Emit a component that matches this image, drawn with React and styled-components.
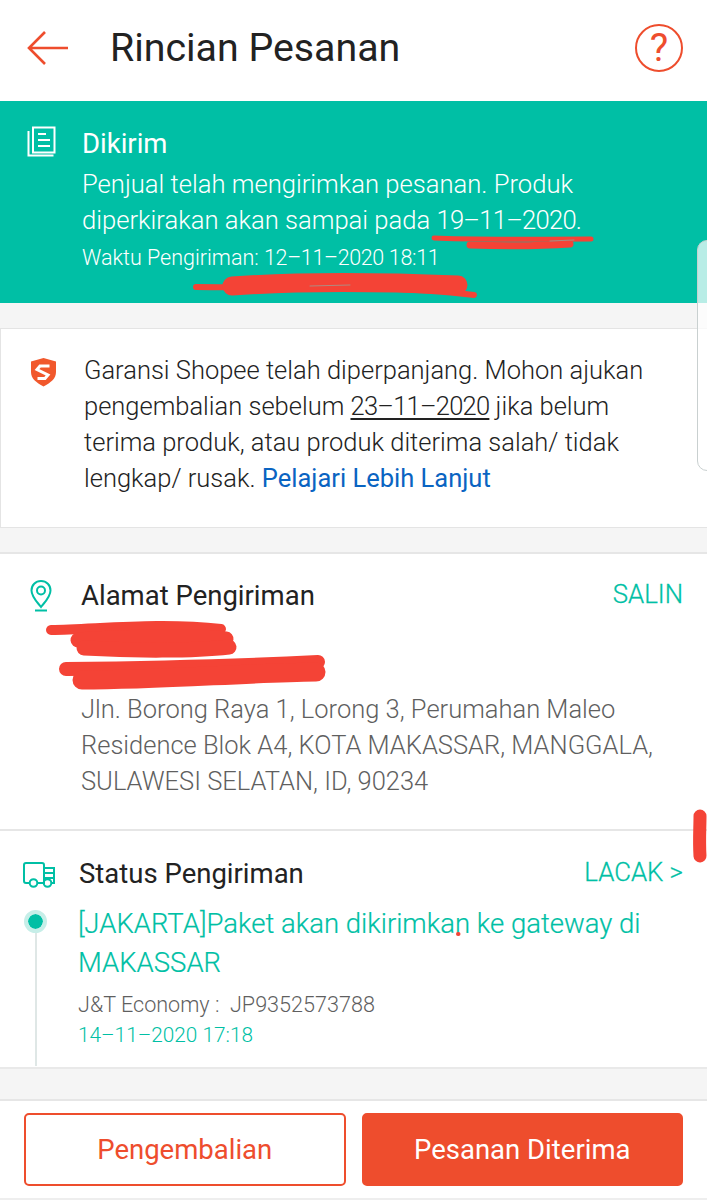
import React from 'react'
import styled, { createGlobalStyle } from 'styled-components'

const orange = '#ee4d2d'
const teal = '#00bfa5'

const Global = createGlobalStyle`
  html, body {
    margin: 0;
    padding: 0;
    background: #f5f5f5;
    font-family: Roboto, 'Liberation Sans', sans-serif;
  }
`

const Page = styled.div`
  position: relative;
  width: 707px;
  height: 1200px;
  overflow: hidden;
  display: flex;
  flex-direction: column;
  background: #f5f5f5;
`

const Header = styled.header`
  height: 101px;
  flex: none;
  box-sizing: border-box;
  display: flex;
  align-items: center;
  padding: 0 24px 6px 27px;
  background: #fff;
`

const Title = styled.h1`
  flex: 1;
  margin: 0 0 0 41px;
  font-size: 39.3px;
  font-weight: 400;
  color: #222;
`

const HelpIcon = styled.div`
  width: 44px;
  height: 44px;
  border: 2px solid ${orange};
  border-radius: 50%;
  display: flex;
  align-items: center;
  justify-content: center;
  font-size: 39px;
  color: ${orange};
`

const Banner = styled.section`
  height: 202px;
  flex: none;
  box-sizing: border-box;
  display: flex;
  padding: 25px 0 0 27px;
  background: ${teal};
  color: #fff;
`

const BannerIcon = styled.svg`
  width: 29px;
  height: 31px;
  flex: none;
  margin-right: 27px;
`

const BannerTitle = styled.div`
  font-size: 27.5px;
  line-height: 35px;
  margin-left: -1px;
`

const BannerText = styled.div`
  margin-top: 6px;
  margin-left: -1px;
  font-size: 25.6px;
  font-weight: 300;
  line-height: 35.5px;
`

const BannerNote = styled.div`
  margin-top: 3px;
  margin-left: -1px;
  font-size: 21.5px;
  font-weight: 300;
  line-height: 34px;
`

const DateText = styled.span`
  letter-spacing: ${(p) => p.$spacing || -0.75}px;
`

const NoticeCard = styled.section`
  height: 200px;
  flex: none;
  box-sizing: border-box;
  margin-top: 25px;
  display: flex;
  padding: 23px 0 0 29px;
  background: #fff;
  border: 1px solid #e4e4e4;
  border-right: none;
  color: #222;
`

const ShieldIcon = styled.svg`
  width: 27px;
  height: 31px;
  flex: none;
  margin-top: 5px;
  margin-right: 27px;
`

const BodyText = styled.div`
  font-size: 25.5px;
  font-weight: 300;
  line-height: 36px;
`

const Dated = styled(DateText)`
  text-decoration: underline;
  text-underline-offset: 3px;
`

const Link = styled.span`
  color: #0a64c2;
  font-weight: 400;
`

const Section = styled.section`
  flex: none;
  height: ${(p) => p.$height}px;
  margin-top: ${(p) => p.$gap || 0}px;
  box-sizing: border-box;
  background: #fff;
  border-top: 2px solid #e6e6e6;
  border-bottom: ${(p) => (p.$closed ? '2px solid #e9e9e9' : 'none')};
  padding: ${(p) => p.$top}px 24px 0 ${(p) => p.$left}px;
`

const SectionHead = styled.div`
  display: flex;
  align-items: center;
  height: 36px;
`

const IconSlot = styled.svg`
  width: ${(p) => p.$width}px;
  height: 36px;
  flex: none;
  margin-right: ${(p) => p.$gap}px;
`

const SectionTitle = styled.div`
  flex: 1;
  font-size: 27.5px;
  color: #222;
`

const Action = styled.div`
  padding-bottom: 3px;
  font-size: 25.8px;
  font-weight: 300;
  color: ${teal};
  -webkit-text-stroke: 0.3px ${teal};
`

const Address = styled.div`
  margin: 78px 0 0 52px;
  font-size: 25.5px;
  font-weight: 300;
  line-height: 36px;
  color: #5f5f5f;
`

const Timeline = styled.div`
  display: flex;
  margin-top: 13px;
`

const Track = styled.div`
  position: relative;
  width: 24px;
  flex: none;
  margin-right: 31px;
  height: 162px;
`

const Dot = styled.div`
  width: 15px;
  height: 15px;
  margin: 6px 0 0 1px;
  border: 4px solid #c6eee8;
  background-clip: padding-box;
  background-color: ${teal};
  border-radius: 50%;
`

const Rail = styled.div`
  position: absolute;
  left: 12px;
  top: 29px;
  bottom: 0;
  width: 2px;
  background: #dfe7e6;
`

const EventText = styled.div`
  font-size: 27.5px;
  font-weight: 300;
  line-height: 39px;
  color: ${teal};
  -webkit-text-stroke: 0.2px ${teal};
`

const Carrier = styled.div`
  margin-top: 7px;
  font-size: 21.6px;
  font-weight: 300;
  line-height: 31px;
  color: #5f5f5f;
`

const EventDate = styled.div`
  font-size: 20.8px;
  font-weight: 300;
  line-height: 31px;
  color: ${teal};
`

const Footer = styled.footer`
  flex: 1;
  margin-top: 30px;
  box-sizing: border-box;
  display: flex;
  gap: 16px;
  padding: 12px 24px 0;
  background: #fff;
  border-top: 2px solid #e6e6e6;
  border-bottom: 2px solid #eee;
`

const Button = styled.div`
  flex: 1;
  height: 73px;
  box-sizing: border-box;
  display: flex;
  align-items: center;
  justify-content: center;
  border: 2px solid ${orange};
  border-radius: 5px;
  font-size: 27.5px;
  color: ${(p) => (p.$solid ? '#fff' : orange)};
  background: ${(p) => (p.$solid ? orange : '#fff')};
`

const EdgeHandle = styled.div`
  position: absolute;
  top: 240px;
  left: 697px;
  width: 20px;
  height: 231px;
  box-sizing: border-box;
  border: 1px solid #c9d0d0;
  border-radius: 10px;
  background: rgba(255, 255, 255, 0.72);
`

const Scribbles = styled.svg`
  position: absolute;
  left: 0;
  top: 0;
  width: 707px;
  height: 1200px;
  pointer-events: none;
`

const Redaction = styled.path`
  fill: none;
  stroke: ${(p) => p.$color || '#f44336'};
  stroke-width: ${(p) => p.$w};
  stroke-linecap: round;
  stroke-linejoin: round;
`

const marks = [
  { d: 'M434 238c40 2 100 1 157 1', w: 5 },
  { d: 'M470 245c30 1 70 1 100-1', w: 7 },
  { d: 'M550 241l24-1', w: 1, color: '#a58f86' },
  { d: 'M196 287c70 1 190-3 278 8', w: 6 },
  { d: 'M232 286c70-5 150-4 226-1', w: 19 },
  { d: 'M310 286l40-1', w: 1, color: '#b08a80' },
  { d: 'M51 630c50-1 110-8 170-1', w: 10 },
  { d: 'M78 640c50-4 120-4 148-1', w: 15 },
  { d: 'M84 648c50 3 110 3 145-1', w: 15 },
  { d: 'M66 669c90-1 170-3 252-7', w: 14 },
  { d: 'M82 680c80 0 160-7 234-8', w: 19 },
  { d: 'M700 816c0 12-1 24 0 40', w: 13 },
  { d: 'M458 934h.5', w: 4 },
]

const App = () => {
  return (
    <Page>
      <Global />
      <Header>
        <svg width="42" height="36" viewBox="0 0 42 36" fill="none" stroke={orange} strokeWidth="2.6">
          <path d="M41 18H2M18 2 2 18l16 16" />
        </svg>
        <Title>Rincian Pesanan</Title>
        <HelpIcon>?</HelpIcon>
      </Header>

      <Banner>
        <BannerIcon viewBox="0 0 29 31" fill="none" stroke="#fff" strokeWidth="2">
          <path d="M6 1.5h21.5v25H6z" />
          <path d="M1.5 5v24.5h25" />
          <path d="M11 8h8M11 14h12M11 20h12" />
        </BannerIcon>
        <div>
          <BannerTitle>Dikirim</BannerTitle>
          <BannerText>
            Penjual telah mengirimkan pesanan. Produk
            <br />
            diperkirakan akan sampai pada <DateText>19–11–2020</DateText>.
          </BannerText>
          <BannerNote>
            Waktu Pengiriman: <DateText $spacing={-0.35}>12–11–2020 18:11</DateText>
          </BannerNote>
        </div>
      </Banner>

      <NoticeCard>
        <ShieldIcon viewBox="0 0 27 31">
          <path d="M13.5 1 26 4.5V15c0 6.5-5 10.5-12.5 14.5C6 25.5 1 21.5 1 15V4.5z" fill="#f1582c" />
          <path
            d="M19.5 9H10L7 12.5 18 18l-3 3.5H7.5"
            fill="none"
            stroke="#fff"
            strokeWidth="3"
          />
        </ShieldIcon>
        <BodyText>
          Garansi Shopee telah diperpanjang. Mohon ajukan
          <br />
          pengembalian sebelum <Dated>23–11–2020</Dated> jika belum
          <br />
          terima produk, atau produk diterima salah/ tidak
          <br />
          lengkap/ rusak. <Link>Pelajari Lebih Lanjut</Link>
        </BodyText>
      </NoticeCard>

      <Section $gap={24} $height={277} $top={23} $left={29}>
        <SectionHead>
          <IconSlot $width={24} $gap={28} viewBox="0 0 24 36" fill="none" stroke={teal} strokeWidth="2">
            <path d="M12 4C6.5 4 2.5 8 2.5 13.5 2.5 20 9 26 12 30c3-4 9.5-10 9.5-16.5C21.5 8 17.5 4 12 4z" />
            <circle cx="12" cy="13.5" r="4" />
            <path d="M6 33.5h12" />
          </IconSlot>
          <SectionTitle>Alamat Pengiriman</SectionTitle>
          <Action>SALIN</Action>
        </SectionHead>
        <Address>
          Jln. Borong Raya 1, Lorong 3, Perumahan Maleo
          <br />
          Residence Blok A4, KOTA MAKASSAR, MANGGALA,
          <br />
          SULAWESI SELATAN, ID, 90234
        </Address>
      </Section>

      <Section $closed $height={240} $top={24} $left={23}>
        <SectionHead>
          <IconSlot $width={33} $gap={23} viewBox="0 0 33 36" fill="none" stroke={teal} strokeWidth="2">
            <path d="M7 28H3a2 2 0 0 1-2-2V10a2 2 0 0 1 2-2h16a2 2 0 0 1 2 2v18h-7" />
            <path d="M21 13h10v15h-3M21 18h10M21 23h10" />
            <circle cx="10.5" cy="28" r="3.8" />
            <circle cx="24.5" cy="28" r="3.8" />
          </IconSlot>
          <SectionTitle>Status Pengiriman</SectionTitle>
          <Action>LACAK &gt;</Action>
        </SectionHead>
        <Timeline>
          <Track>
            <Dot />
            <Rail />
          </Track>
          <div>
            <EventText>
              [JAKARTA]Paket akan dikirimkan ke gateway di
              <br />
              MAKASSAR
            </EventText>
            <Carrier>J&amp;T Economy :&nbsp; JP9352573788</Carrier>
            <EventDate>14–11–2020 17:18</EventDate>
          </div>
        </Timeline>
      </Section>

      <Footer>
        <Button>Pengembalian</Button>
        <Button $solid>Pesanan Diterima</Button>
      </Footer>

      <EdgeHandle />

      <Scribbles viewBox="0 0 707 1200">
        {marks.map((m) => (
          <Redaction key={m.d} d={m.d} $w={m.w} $color={m.color} />
        ))}
      </Scribbles>
    </Page>
  )
}

export default App
